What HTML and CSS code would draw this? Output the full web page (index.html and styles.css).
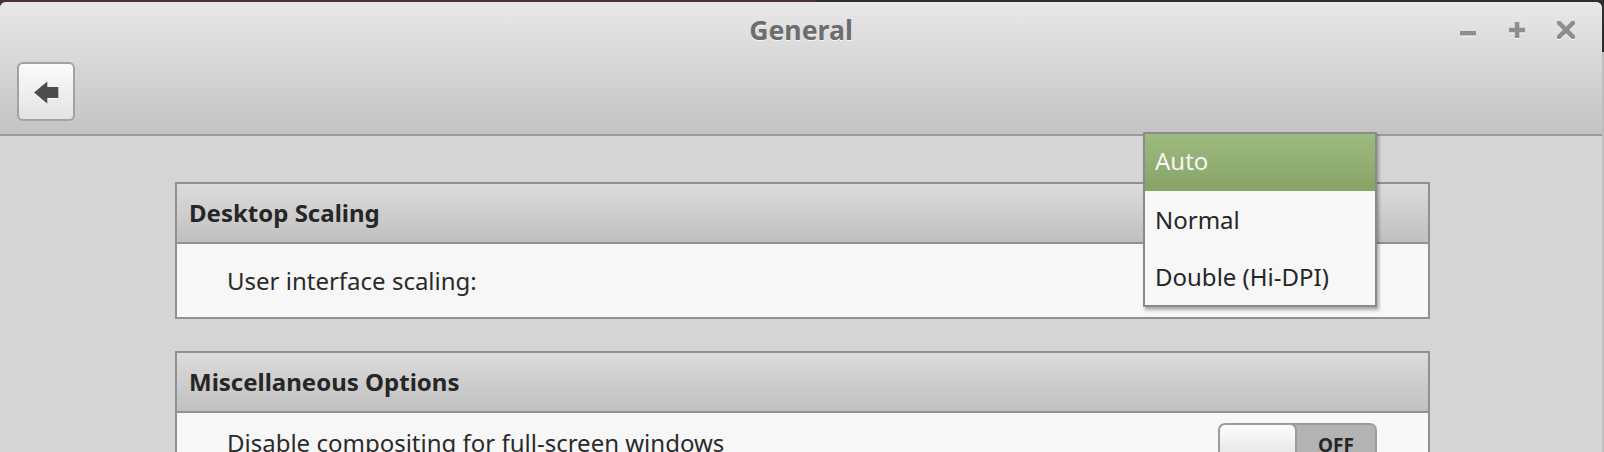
FILE: index.html
```html
<!DOCTYPE html>
<html lang="en">
<head>
<meta charset="utf-8">
<title>General</title>
<link rel="stylesheet" href="styles.css">
</head>
<body>
<div class="window">
  <header class="headerbar">
    <div class="titlebar">
      <div class="spacer"></div>
      <div class="title">General</div>
      <div class="controls">
        <svg class="ctl ctl-min" width="16" height="18" viewBox="0 0 16 18"><rect x="0" y="10" width="16" height="4.5" fill="#8e8e8e"/></svg>
        <svg class="ctl ctl-max" width="16" height="18" viewBox="0 0 16 18"><rect x="5.8" y="1" width="4.6" height="16" fill="#8e8e8e"/><rect x="0" y="6.8" width="16" height="4.6" fill="#8e8e8e"/></svg>
        <svg class="ctl ctl-close" width="18" height="18" viewBox="0 0 18 18"><path d="M2 2 L16 16 M16 2 L2 16" stroke="#8e8e8e" stroke-width="4.6" stroke-linecap="square" fill="none"/></svg>
      </div>
    </div>
    <div class="toolbar">
      <button class="back" type="button" aria-label="Back">
        <svg width="25" height="24" viewBox="0 0 25 24"><polygon points="0,11.5 13.3,0.5 13.3,6 24.3,6 24.3,17 13.3,17 13.3,22.8" fill="#4c4c4c"/></svg>
      </button>
    </div>
  </header>
  <main class="content">
    <section class="group">
      <div class="group-header">Desktop Scaling</div>
      <div class="group-row">
        <span class="label">User interface scaling:</span>
        <div class="combo" aria-label="Auto">
          <ul class="popup">
            <li class="item selected">Auto</li>
            <li class="item">Normal</li>
            <li class="item">Double (Hi-DPI)</li>
          </ul>
        </div>
      </div>
    </section>
    <section class="group">
      <div class="group-header">Miscellaneous Options</div>
      <div class="group-row">
        <span class="label">Disable compositing for full-screen windows</span>
        <div class="switch">
          <div class="knob"></div>
          <div class="state">OFF</div>
        </div>
      </div>
    </section>
  </main>
</div>
</body>
</html>
```

FILE: styles.css
```css
* { box-sizing: border-box; }

html, body {
  margin: 0;
  padding: 0;
  height: 100%;
  overflow: hidden;
}

body {
  font-family: "Noto Sans", "DejaVu Sans", sans-serif;
  background:
    linear-gradient(to bottom, #2e2e2e 0 52px, #bdbdbd 52px) right top / 2px 100% no-repeat,
    linear-gradient(to right, #4a2f3d 0 816px, #2f2f2f 816px);
  padding-top: 2px;
}

.window {
  width: 1602px;
  height: 450px;
  border-radius: 6px 6px 0 0;
  overflow: hidden;
  background: #d5d5d5;
  display: flex;
  flex-direction: column;
}

.headerbar {
  flex-shrink: 0;
  background: linear-gradient(to bottom, #e8e8e8, #c3c3c3);
  border-bottom: 2px solid #9b9b9b;
  height: 134px;
  display: flex;
  flex-direction: column;
}

.titlebar {
  height: 60px;
  flex-shrink: 0;
  display: grid;
  grid-template-columns: 1fr auto 1fr;
  align-items: start;
}

.title {
  padding-top: 10px;
  font-weight: 700;
  font-size: 26.67px;
  line-height: 36px;
  color: #6d6d6d;
  text-shadow: 0 1px 0 rgba(255, 255, 255, 0.75);
}

.controls {
  justify-self: end;
  display: flex;
  align-items: flex-start;
  padding-top: 19px;
  padding-right: 27px;
}

.ctl {
  display: block;
  filter: drop-shadow(0 1px 0 #ffffff);
}

.ctl-max { margin-left: 33px; }
.ctl-close { margin-left: 32px; }

.toolbar {
  padding-left: 17px;
  display: flex;
}

.back {
  width: 58px;
  height: 59px;
  margin: 0;
  padding: 0;
  border: 2px solid #a2a2a2;
  border-radius: 6px;
  background: linear-gradient(to bottom, #fbfbfb, #e3e3e3);
  display: flex;
  align-items: center;
  justify-content: center;
}

.back svg {
  display: block;
  margin-top: 3px;
  filter: drop-shadow(0 1px 0 #ffffff);
}

.content {
  flex: 1;
  min-height: 0;
  padding: 46px 172px 0 175px;
  display: flex;
  flex-direction: column;
  gap: 32px;
}

.group {
  flex-shrink: 0;
  border: 2px solid #919191;
  background: #f7f7f7;
}

.group-header {
  height: 60px;
  padding-left: 12px;
  border-bottom: 2px solid #919191;
  background: linear-gradient(to bottom, #dcdcdc, #c0c0c0);
  font-weight: 700;
  font-size: 24px;
  line-height: 58px;
  color: #262626;
}

.group-row {
  display: flex;
  align-items: center;
  justify-content: space-between;
  padding: 10px 51px 10px 50px;
  font-size: 24px;
  line-height: 32px;
  color: #2a2a2a;
}

.combo {
  position: relative;
  width: 234px;
  height: 53px;
  border: 2px solid #a2a2a2;
  border-radius: 6px;
  background: linear-gradient(to bottom, #fbfbfb, #e3e3e3);
}

.popup {
  position: absolute;
  top: -124px;
  left: -2px;
  width: 234px;
  margin: 0;
  padding: 0;
  list-style: none;
  border: 2px solid #8b8b8b;
  background: #f7f7f7;
  box-shadow: 2px 3px 3px rgba(0, 0, 0, 0.3);
}

.item {
  height: 57px;
  padding-left: 10px;
  display: flex;
  align-items: center;
  font-size: 24px;
  line-height: 32px;
  color: #262626;
}

.item.selected {
  background: linear-gradient(to bottom, #9dbb7e, #85a466);
  color: #f6f6f6;
  padding-bottom: 4px;
}

.switch {
  width: 159px;
  height: 40px;
  border: 2px solid #9c9c9c;
  border-radius: 7px;
  background: #b3b3b3;
  display: flex;
  overflow: hidden;
}

.knob {
  width: 79px;
  margin: -2px 0 -2px -2px;
  border: 2px solid #9c9c9c;
  border-radius: 7px;
  background: linear-gradient(to bottom, #fdfdfd, #e2e2e2);
}

.state {
  flex: 1;
  text-align: center;
  font-weight: 700;
  font-size: 19px;
  line-height: 36px;
  color: #262626;
  padding-top: 2px;
}
```
